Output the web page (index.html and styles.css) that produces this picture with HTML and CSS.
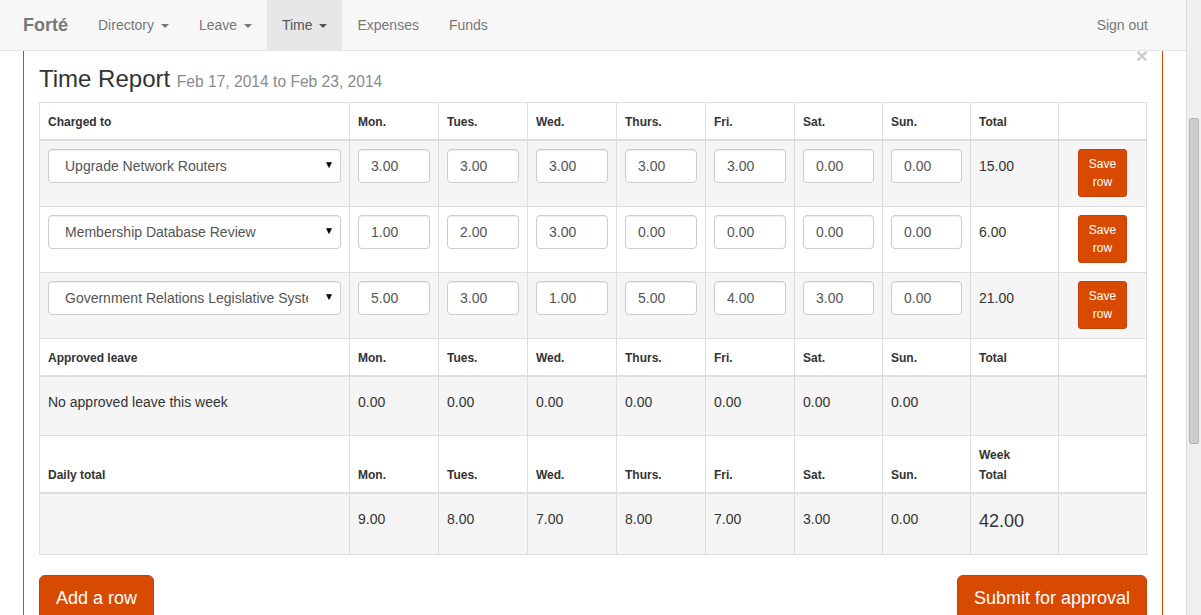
FILE: index.html
```html
<!DOCTYPE html>
<html lang="en">
<head>
    <meta charset="UTF-8">
    <title>Forté - Time Report</title>
    <link rel="stylesheet" href="styles.css">
</head>
<body>
    <div class="page">
        <nav class="navbar">
            <a class="brand" href="#">Forté</a>
            <ul class="nav">
                <li><a href="#">Directory <span class="caret"></span></a></li>
                <li><a href="#">Leave <span class="caret"></span></a></li>
                <li class="active"><a href="#">Time <span class="caret"></span></a></li>
                <li><a href="#">Expenses</a></li>
                <li><a href="#">Funds</a></li>
            </ul>
            <ul class="nav nav-right">
                <li><a href="#">Sign out</a></li>
            </ul>
        </nav>

        <div class="panel">
            <button class="close" type="button">&times;</button>
            <h3>Time Report <small>Feb 17, 2014 to Feb 23, 2014</small></h3>

            <table class="report">
                <colgroup>
                    <col style="width: 310px">
                    <col style="width: 89px">
                    <col style="width: 89px">
                    <col style="width: 89px">
                    <col style="width: 89px">
                    <col style="width: 89px">
                    <col style="width: 88px">
                    <col style="width: 88px">
                    <col style="width: 88px">
                    <col style="width: 88px">
                </colgroup>

                <!-- projects -->
                <tr class="head">
                    <th>Charged to</th>
                    <th>Mon.</th><th>Tues.</th><th>Wed.</th><th>Thurs.</th><th>Fri.</th><th>Sat.</th><th>Sun.</th>
                    <th>Total</th>
                    <th></th>
                </tr>
                <tr class="striped edit">
                    <td>
                        <div class="select-wrap">
                            <select class="form-control">
                                <option>Upgrade Network Routers</option>
                            </select>
                        </div>
                    </td>
                    <td><input class="form-control" value="3.00"></td>
                    <td><input class="form-control" value="3.00"></td>
                    <td><input class="form-control" value="3.00"></td>
                    <td><input class="form-control" value="3.00"></td>
                    <td><input class="form-control" value="3.00"></td>
                    <td><input class="form-control" value="0.00"></td>
                    <td><input class="form-control" value="0.00"></td>
                    <td><p class="static">15.00</p></td>
                    <td class="center"><button class="btn btn-sm">Save<br>row</button></td>
                </tr>
                <tr class="edit">
                    <td>
                        <div class="select-wrap">
                            <select class="form-control">
                                <option>Membership Database Review</option>
                            </select>
                        </div>
                    </td>
                    <td><input class="form-control" value="1.00"></td>
                    <td><input class="form-control" value="2.00"></td>
                    <td><input class="form-control" value="3.00"></td>
                    <td><input class="form-control" value="0.00"></td>
                    <td><input class="form-control" value="0.00"></td>
                    <td><input class="form-control" value="0.00"></td>
                    <td><input class="form-control" value="0.00"></td>
                    <td><p class="static">6.00</p></td>
                    <td class="center"><button class="btn btn-sm">Save<br>row</button></td>
                </tr>
                <tr class="striped edit">
                    <td>
                        <div class="select-wrap">
                            <select class="form-control">
                                <option>Government Relations Legislative System</option>
                            </select>
                        </div>
                    </td>
                    <td><input class="form-control" value="5.00"></td>
                    <td><input class="form-control" value="3.00"></td>
                    <td><input class="form-control" value="1.00"></td>
                    <td><input class="form-control" value="5.00"></td>
                    <td><input class="form-control" value="4.00"></td>
                    <td><input class="form-control" value="3.00"></td>
                    <td><input class="form-control" value="0.00"></td>
                    <td><p class="static">21.00</p></td>
                    <td class="center"><button class="btn btn-sm">Save<br>row</button></td>
                </tr>

                <!-- leave -->
                <tr class="head">
                    <th>Approved leave</th>
                    <th>Mon.</th><th>Tues.</th><th>Wed.</th><th>Thurs.</th><th>Fri.</th><th>Sat.</th><th>Sun.</th>
                    <th>Total</th>
                    <th></th>
                </tr>
                <tr class="striped leave">
                    <td><p class="static">No approved leave this week</p></td>
                    <td><p class="static">0.00</p></td>
                    <td><p class="static">0.00</p></td>
                    <td><p class="static">0.00</p></td>
                    <td><p class="static">0.00</p></td>
                    <td><p class="static">0.00</p></td>
                    <td><p class="static">0.00</p></td>
                    <td><p class="static">0.00</p></td>
                    <td></td>
                    <td></td>
                </tr>

                <!-- totals -->
                <tr class="head">
                    <th>Daily total</th>
                    <th>Mon.</th><th>Tues.</th><th>Wed.</th><th>Thurs.</th><th>Fri.</th><th>Sat.</th><th>Sun.</th>
                    <th>Week<br>Total</th>
                    <th></th>
                </tr>
                <tr class="striped totals">
                    <td></td>
                    <td><p class="static">9.00</p></td>
                    <td><p class="static">8.00</p></td>
                    <td><p class="static">7.00</p></td>
                    <td><p class="static">8.00</p></td>
                    <td><p class="static">7.00</p></td>
                    <td><p class="static">3.00</p></td>
                    <td><p class="static">0.00</p></td>
                    <td><p class="week-total">42.00</p></td>
                    <td></td>
                </tr>
            </table>

            <div class="actions">
                <button class="btn btn-lg">Add a row</button>
                <button class="btn btn-lg">Submit for approval</button>
            </div>
        </div>
    </div>

    <div class="scrollbar"><div class="thumb"></div></div>
</body>
</html>
```

FILE: styles.css
```css
html, body {
    height: 100%;
}

body {
    margin: 0;
    display: flex;
    overflow: hidden;
    font-family: 'Liberation Sans', Arial, sans-serif;
    font-size: 14px;
    line-height: 20px;
    color: #333;
    background-color: #fff;
}

.page {
    flex: 1;
    min-width: 0;
}

/* navbar */
.navbar {
    display: flex;
    height: 50px;
    padding: 0 23px 0 8px;
    background-color: #f7f7f7;
    border-bottom: 1px solid #e3e3e3;
}

.navbar a {
    text-decoration: none;
}

.brand {
    padding: 15px;
    font-size: 18px;
    font-weight: bold;
    color: #777;
}

.nav {
    display: flex;
    list-style: none;
    margin: 0;
    padding: 0;
}

.nav a {
    display: block;
    padding: 15px;
    color: #777;
}

.nav .active a {
    background-color: #e7e7e7;
    color: #555;
}

.nav-right {
    margin-left: auto;
}

.caret {
    display: inline-block;
    width: 0;
    height: 0;
    margin-left: 3px;
    vertical-align: middle;
    border-top: 4px solid;
    border-left: 4px solid transparent;
    border-right: 4px solid transparent;
}

/* panel */
.panel {
    position: relative;
    margin: 0 23px;
    padding: 15px 15px 0;
    border: 1px solid #d84a06;
    border-top: none;
    height: 600px;
}

.close {
    position: absolute;
    top: -6px;
    right: 14px;
    padding: 0;
    border: 0;
    background: none;
    font-family: 'Liberation Sans', Arial, sans-serif;
    font-size: 21px;
    font-weight: bold;
    line-height: 1;
    color: #ccc;
}

h3 {
    margin: 0 0 10px;
    font-size: 24px;
    font-weight: normal;
    line-height: 1.1;
}

h3 small {
    font-size: 65%;
    color: #8a8a8a;
}

/* table */
.report {
    width: 100%;
    table-layout: fixed;
    border-collapse: collapse;
    border: 1px solid #ddd;
}

.report th,
.report td {
    padding: 8px;
    border: 1px solid #ddd;
    text-align: left;
}

.report th {
    padding-top: 9px;
    padding-bottom: 7px;
    font-size: 12px;
    font-weight: bold;
    vertical-align: bottom;
    border-bottom-width: 2px;
}

.report td {
    vertical-align: top;
}

.report .striped td {
    background-color: #f5f5f5;
}

.report .center {
    text-align: center;
}

.edit td {
    padding-bottom: 9px;
}

.leave td {
    padding-bottom: 16px;
}

.totals td {
    padding-bottom: 18px;
}

.static {
    margin: 0;
    padding: 7px 0;
}

.week-total {
    margin: 0;
    padding-top: 9px;
    font-size: 18px;
}

.form-control {
    display: block;
    width: 100%;
    height: 34px;
    box-sizing: border-box;
    padding: 6px 12px;
    border: 1px solid #ccc;
    border-radius: 4px;
    background-color: #fff;
    box-shadow: inset 0 1px 1px rgba(0, 0, 0, 0.075);
    font-family: 'Liberation Sans', Arial, sans-serif;
    font-size: 14px;
    color: #555;
}

.select-wrap {
    position: relative;
}

.select-wrap select {
    appearance: none;
    -webkit-appearance: none;
    padding: 6px 32px 6px 16px;
}

.select-wrap::after {
    content: "\25BC";
    position: absolute;
    top: 10px;
    right: 7px;
    font-size: 10px;
    line-height: 12px;
    color: #000;
    pointer-events: none;
}

/* buttons */
.btn {
    border: 1px solid #c44304;
    background-color: #d84a02;
    color: #fff;
    font-family: 'Liberation Sans', Arial, sans-serif;
}

.btn-sm {
    padding: 5px 10px;
    font-size: 12px;
    line-height: 18px;
    border-radius: 3px;
}

.btn-lg {
    padding: 10px 16px;
    font-size: 18px;
    line-height: 24px;
    border-radius: 6px;
}

.actions {
    display: flex;
    justify-content: space-between;
    margin-top: 20px;
}

/* window scrollbar */
.scrollbar {
    width: 14px;
    flex: none;
    padding-top: 118px;
    background-color: #efefef;
    border-left: 1px solid #dcdcdc;
}

.thumb {
    height: 326px;
    margin: 0 2px 0 2px;
    background-color: #cdcdcd;
    border: 1px solid #b5b5b5;
    border-radius: 2px;
    box-sizing: border-box;
}
```
